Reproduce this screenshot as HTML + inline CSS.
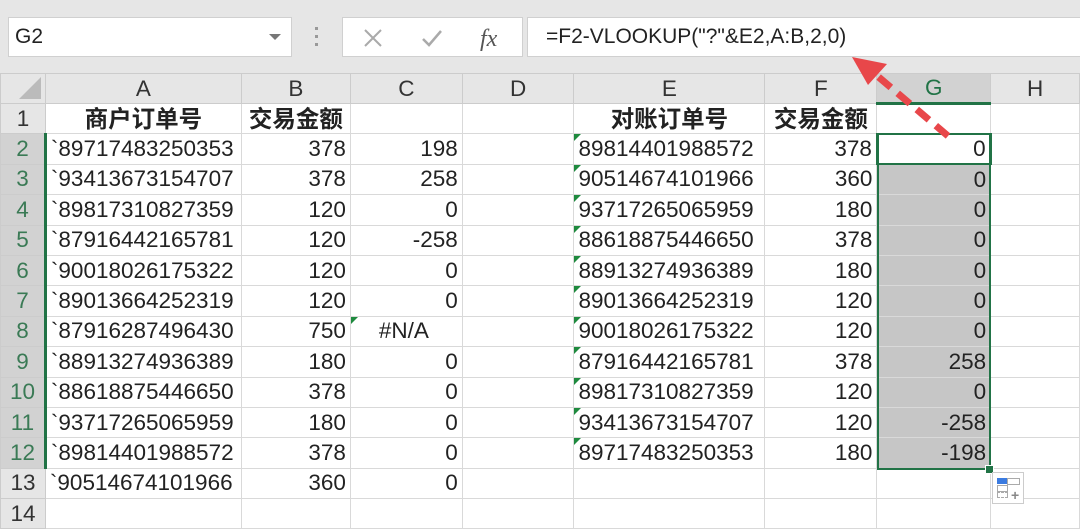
<!DOCTYPE html><html><head><meta charset="utf-8"><style>
body{margin:0;width:1080px;height:531px;overflow:hidden;background:#fff;font-family:"Liberation Sans","Noto Sans CJK SC",sans-serif;position:relative}
.tb{position:absolute;left:0;top:0;width:1080px;height:74px;background:#e6e6e6}
.box{position:absolute;background:#fff;border:1px solid #d0d0d0;box-sizing:border-box}
table{position:absolute;left:0;top:73px;border-collapse:collapse;table-layout:fixed}
td{border:1px solid #d9d9d9;height:30.4px;padding:0 4px;font-size:22.5px;color:#222;white-space:nowrap;overflow:hidden;box-sizing:border-box;line-height:28px}
tr.h td{height:29px;background:#e6e6e6;text-align:center;color:#333;border-color:#ccc}
td.r{background:#e6e6e6;text-align:center;color:#333;padding:0;border-color:#ccc}
td.rs{background:#d2d2d2;color:#3a7a55;border-right:3px solid #217346}
.n{text-align:right}
.b{font-weight:bold;text-align:center;font-size:23.5px}
.gs{background:#c6c6c6}
.t{position:relative}
.t:before{content:"";position:absolute;left:0;top:0;border-top:7px solid #1e8a3e;border-right:7px solid transparent}
</style></head><body>
<div class="tb"></div>
<div class="box" style="left:8px;top:17px;width:284px;height:40px;font-size:21px;line-height:38px;padding-left:6px;color:#222">G2<span style="position:absolute;right:10px;top:16px;border-top:6px solid #777;border-left:6px solid transparent;border-right:6px solid transparent"></span></div>
<div style="position:absolute;left:315px;top:27px;width:3px;height:20px;background:repeating-linear-gradient(#999 0 3px,transparent 3px 8px)"></div>
<div class="box" style="left:342px;top:17px;width:181px;height:40px">
<svg width="181" height="40" style="position:absolute;left:0;top:0"><path d="M22 12l16 16M38 12l-16 16" stroke="#aaa" stroke-width="2"/><path d="M80 21l6 6 12-14" stroke="#aaa" stroke-width="2.5" fill="none"/><text x="137" y="28" font-family="Liberation Serif" font-style="italic" font-size="24" fill="#555">fx</text></svg></div>
<div class="box" style="left:527px;top:17px;width:560px;height:40px;font-size:21px;line-height:38px;padding-left:18px;color:#222">=F2-VLOOKUP("?"&amp;E2,A:B,2,0)</div>
<table>
<colgroup><col style="width:45px"><col style="width:196px"><col style="width:109px"><col style="width:112px"><col style="width:112px"><col style="width:191px"><col style="width:112px"><col style="width:114px"><col style="width:89px"></colgroup>
<tr class="h"><td style="position:relative"><span style="position:absolute;right:4px;bottom:4px;border-bottom:22px solid #bbb;border-left:22px solid transparent"></span></td><td>A</td><td>B</td><td>C</td><td>D</td><td>E</td><td>F</td><td style="background:#d2d2d2;color:#217346;border-bottom:3px solid #217346">G</td><td>H</td></tr>
<tr><td class="r">1</td><td class="b">商户订单号</td><td class="b">交易金额</td><td></td><td></td><td class="b">对账订单号</td><td class="b">交易金额</td><td></td><td></td></tr>
<tr><td class="r rs">2</td><td>`89717483250353</td><td class="n">378</td><td class="n">198</td><td></td><td class="t">89814401988572</td><td class="n">378</td><td class="n" style="border:2px solid #217346">0</td><td></td></tr>
<tr><td class="r rs">3</td><td>`93413673154707</td><td class="n">378</td><td class="n">258</td><td></td><td class="t">90514674101966</td><td class="n">360</td><td class="n gs">0</td><td></td></tr>
<tr><td class="r rs">4</td><td>`89817310827359</td><td class="n">120</td><td class="n">0</td><td></td><td class="t">93717265065959</td><td class="n">180</td><td class="n gs">0</td><td></td></tr>
<tr><td class="r rs">5</td><td>`87916442165781</td><td class="n">120</td><td class="n">-258</td><td></td><td class="t">88618875446650</td><td class="n">378</td><td class="n gs">0</td><td></td></tr>
<tr><td class="r rs">6</td><td>`90018026175322</td><td class="n">120</td><td class="n">0</td><td></td><td class="t">88913274936389</td><td class="n">180</td><td class="n gs">0</td><td></td></tr>
<tr><td class="r rs">7</td><td>`89013664252319</td><td class="n">120</td><td class="n">0</td><td></td><td class="t">89013664252319</td><td class="n">120</td><td class="n gs">0</td><td></td></tr>
<tr><td class="r rs">8</td><td>`87916287496430</td><td class="n">750</td><td class="t" style="padding-left:28px">#N/A</td><td></td><td class="t">90018026175322</td><td class="n">120</td><td class="n gs">0</td><td></td></tr>
<tr><td class="r rs">9</td><td>`88913274936389</td><td class="n">180</td><td class="n">0</td><td></td><td class="t">87916442165781</td><td class="n">378</td><td class="n gs">258</td><td></td></tr>
<tr><td class="r rs">10</td><td>`88618875446650</td><td class="n">378</td><td class="n">0</td><td></td><td class="t">89817310827359</td><td class="n">120</td><td class="n gs">0</td><td></td></tr>
<tr><td class="r rs">11</td><td>`93717265065959</td><td class="n">180</td><td class="n">0</td><td></td><td class="t">93413673154707</td><td class="n">120</td><td class="n gs">-258</td><td></td></tr>
<tr><td class="r rs">12</td><td>`89814401988572</td><td class="n">378</td><td class="n">0</td><td></td><td class="t">89717483250353</td><td class="n">180</td><td class="n gs">-198</td><td></td></tr>
<tr><td class="r">13</td><td>`90514674101966</td><td class="n">360</td><td class="n">0</td><td></td><td></td><td></td><td></td><td></td></tr>
<tr><td class="r">14</td><td></td><td></td><td></td><td></td><td></td><td></td><td></td><td></td></tr>
</table>
<div style="position:absolute;left:877px;top:133px;width:114px;height:337px;border:2px solid #217346;box-sizing:border-box;pointer-events:none"></div>
<div style="position:absolute;left:985px;top:465px;width:7px;height:7px;background:#217346;border:1px solid #fff"></div>
<div style="position:absolute;left:992px;top:472px;width:32px;height:32px;background:#fff;border:1px solid #ccc;box-sizing:border-box">
<div style="position:absolute;left:4px;top:5px;width:10px;height:6px;background:#3b7be0"></div><div style="position:absolute;left:14px;top:5px;width:11px;height:5px;border:1px solid #aaa"></div><div style="position:absolute;left:4px;top:12px;width:9px;height:5px;border:1px solid #aaa"></div><div style="position:absolute;left:4px;top:19px;width:9px;height:4px;border:1px dashed #aaa"></div><div style="position:absolute;left:18px;top:15px;font-size:14px;font-weight:bold;color:#888;line-height:14px">+</div></div>
<svg width="1080" height="531" style="position:absolute;left:0;top:0;pointer-events:none">
<line x1="948" y1="136" x2="875" y2="74" stroke="#e8474a" stroke-width="7" stroke-dasharray="16 9"/>
<polygon points="852,57 887,64 868,85" fill="#e8474a"/>
</svg>
</body></html>
